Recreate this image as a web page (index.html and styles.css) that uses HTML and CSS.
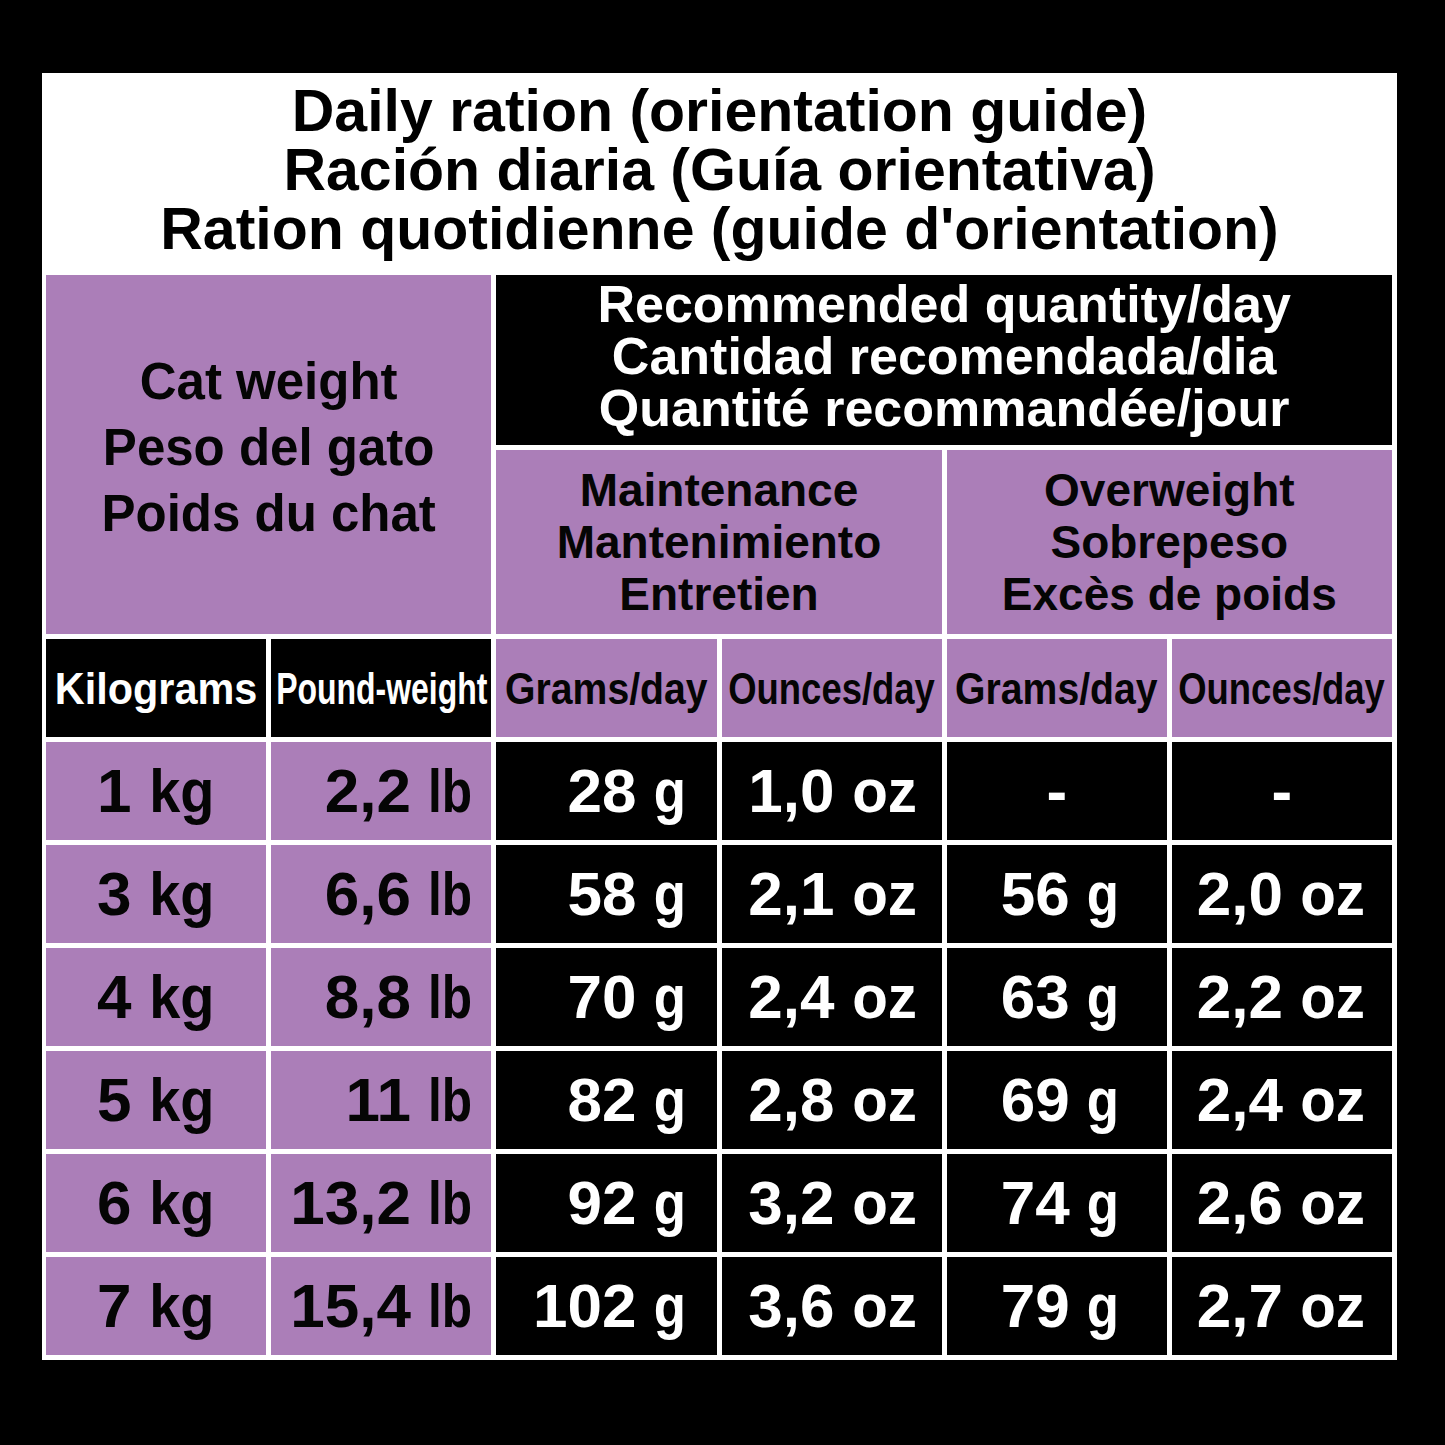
FILE: index.html
```html
<!DOCTYPE html>
<html lang="en">
<head>
<meta charset="utf-8">
<title>Daily ration</title>
<link rel="stylesheet" href="styles.css">
</head>
<body>
<div class="panel">
  <div class="title">
    <div>Daily ration (orientation guide)</div>
    <div>Ración diaria (Guía orientativa)</div>
    <div>Ration quotidienne (guide d'orientation)</div>
  </div>
  <div class="grid">
    <div class="cell purple catweight">
      <div>Cat weight<br>Peso del gato<br>Poids du chat</div>
    </div>
    <div class="cell black recommended">
      <div>Recommended quantity/day<br>Cantidad recomendada/dia<br>Quantité recommandée/jour</div>
    </div>
    <div class="cell purple group maint">
      <div>Maintenance<br>Mantenimiento<br>Entretien</div>
    </div>
    <div class="cell purple group over">
      <div>Overweight<br>Sobrepeso<br>Excès de poids</div>
    </div>

    <div class="cell black unit"><span class="sq sq-kg">Kilograms</span></div>
    <div class="cell black unit"><span class="sq sq-lb">Pound-weight</span></div>
    <div class="cell purple unit"><span class="sq sq-g">Grams/day</span></div>
    <div class="cell purple unit"><span class="sq sq-oz">Ounces/day</span></div>
    <div class="cell purple unit"><span class="sq sq-g">Grams/day</span></div>
    <div class="cell purple unit"><span class="sq sq-oz">Ounces/day</span></div>

    <div class="cell purple num c1"><span class="v">1 <span class="u u-kg">kg</span></span></div>
    <div class="cell purple num c2"><span class="v">2,2 <span class="u u-lb">lb</span></span></div>
    <div class="cell black num c3"><span class="v">28 <span class="u u-g">g</span></span></div>
    <div class="cell black num c4"><span class="v">1,0 <span class="u u-oz">oz</span></span></div>
    <div class="cell black num dash"><span class="v">-</span></div>
    <div class="cell black num dash"><span class="v">-</span></div>

    <div class="cell purple num c1"><span class="v">3 <span class="u u-kg">kg</span></span></div>
    <div class="cell purple num c2"><span class="v">6,6 <span class="u u-lb">lb</span></span></div>
    <div class="cell black num c3"><span class="v">58 <span class="u u-g">g</span></span></div>
    <div class="cell black num c4"><span class="v">2,1 <span class="u u-oz">oz</span></span></div>
    <div class="cell black num c5"><span class="v">56 <span class="u u-g">g</span></span></div>
    <div class="cell black num c6"><span class="v">2,0 <span class="u u-oz">oz</span></span></div>

    <div class="cell purple num c1"><span class="v">4 <span class="u u-kg">kg</span></span></div>
    <div class="cell purple num c2"><span class="v">8,8 <span class="u u-lb">lb</span></span></div>
    <div class="cell black num c3"><span class="v">70 <span class="u u-g">g</span></span></div>
    <div class="cell black num c4"><span class="v">2,4 <span class="u u-oz">oz</span></span></div>
    <div class="cell black num c5"><span class="v">63 <span class="u u-g">g</span></span></div>
    <div class="cell black num c6"><span class="v">2,2 <span class="u u-oz">oz</span></span></div>

    <div class="cell purple num c1"><span class="v">5 <span class="u u-kg">kg</span></span></div>
    <div class="cell purple num c2"><span class="v">11 <span class="u u-lb">lb</span></span></div>
    <div class="cell black num c3"><span class="v">82 <span class="u u-g">g</span></span></div>
    <div class="cell black num c4"><span class="v">2,8 <span class="u u-oz">oz</span></span></div>
    <div class="cell black num c5"><span class="v">69 <span class="u u-g">g</span></span></div>
    <div class="cell black num c6"><span class="v">2,4 <span class="u u-oz">oz</span></span></div>

    <div class="cell purple num c1"><span class="v">6 <span class="u u-kg">kg</span></span></div>
    <div class="cell purple num c2"><span class="v">13,2 <span class="u u-lb">lb</span></span></div>
    <div class="cell black num c3"><span class="v">92 <span class="u u-g">g</span></span></div>
    <div class="cell black num c4"><span class="v">3,2 <span class="u u-oz">oz</span></span></div>
    <div class="cell black num c5"><span class="v">74 <span class="u u-g">g</span></span></div>
    <div class="cell black num c6"><span class="v">2,6 <span class="u u-oz">oz</span></span></div>

    <div class="cell purple num c1"><span class="v">7 <span class="u u-kg">kg</span></span></div>
    <div class="cell purple num c2"><span class="v">15,4 <span class="u u-lb">lb</span></span></div>
    <div class="cell black num c3"><span class="v">102 <span class="u u-g">g</span></span></div>
    <div class="cell black num c4"><span class="v">3,6 <span class="u u-oz">oz</span></span></div>
    <div class="cell black num c5"><span class="v">79 <span class="u u-g">g</span></span></div>
    <div class="cell black num c6"><span class="v">2,7 <span class="u u-oz">oz</span></span></div>
  </div>
</div>
</body>
</html>
```

FILE: styles.css
```css
html, body {
  margin: 0;
  padding: 0;
  background: #000;
}
body {
  font-family: "Liberation Sans", Arial, Helvetica, sans-serif;
  font-weight: bold;
  color: #000;
}
.panel {
  margin: 73px 0 0 42px;
  width: 1355px;
  background: #fff;
}
.title {
  box-sizing: border-box;
  height: 202px;
  padding-top: 9px;
  text-align: center;
  font-size: 59px;
  line-height: 59px;
  color: #000;
}
.grid {
  display: grid;
  grid-template-columns: repeat(6, 1fr);
  grid-template-rows: 170px 184px 98px repeat(6, 98px);
  gap: 5px;
  padding: 0 5px 5px 4px;
  background: #fff;
}
.cell {
  display: flex;
  align-items: center;
  justify-content: center;
  text-align: center;
  overflow: visible;
  min-width: 0;
}
.purple {
  background: #ab7eb8;
  color: #050505;
}
.black {
  background: #000;
  color: #fff;
}
.catweight {
  grid-column: 1 / 3;
  grid-row: 1 / 3;
  font-size: 51px;
  line-height: 66px;
  padding-bottom: 13px;
}
.recommended {
  grid-column: 3 / 7;
  grid-row: 1;
  font-size: 52px;
  line-height: 52px;
  padding-bottom: 9px;
}
.group {
  font-size: 46px;
  line-height: 52px;
  grid-row: 2;
}
.maint { grid-column: 3 / 5; }
.over { grid-column: 5 / 7; }

.unit {
  font-size: 45px;
  line-height: 1;
  white-space: nowrap;
}
.sq {
  display: inline-block;
  transform-origin: center;
}
.sq-kg { transform: scaleX(0.92); }
.sq-lb { transform: scaleX(0.71); }
.sq-g { transform: scaleX(0.87); }
.sq-oz { transform: scaleX(0.81); }

.num {
  font-size: 62px;
  line-height: 1;
  justify-content: flex-end;
  white-space: nowrap;
}
.v {
  white-space: pre;
}
.c1 { padding-right: 52px; }
.c2 { padding-right: 19px; }
.c3 { padding-right: 31px; }
.c4 { padding-right: 25px; }
.c5 { padding-right: 48px; }
.c6 { padding-right: 27px; }
.dash { justify-content: center; }

.u {
  display: inline-block;
  transform-origin: right center;
}
.u-g { transform: scaleX(0.85); margin-left: -6px; }
.u-kg { transform: scaleX(0.9); margin-left: -7px; }
.u-lb { transform: scaleX(0.8); margin-left: -11px; }
.u-oz { transform: scaleX(0.94); margin-left: -4px; }
```
